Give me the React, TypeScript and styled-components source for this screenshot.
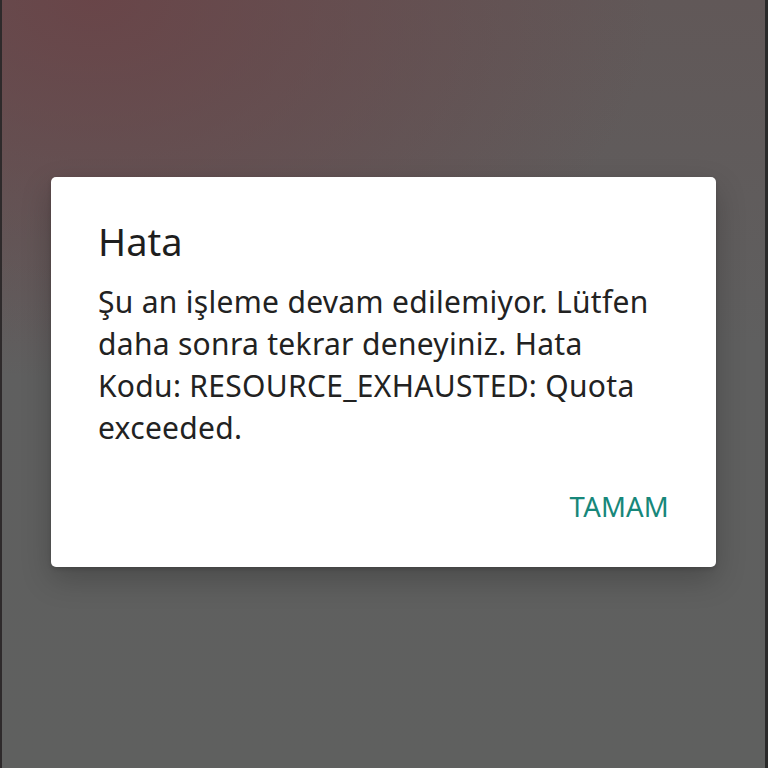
import React from "react";
import styled, { createGlobalStyle } from "styled-components";

const Global = createGlobalStyle`
  html, body { margin: 0; padding: 0; }
  body { width: 768px; height: 768px; overflow: hidden; }
  #root { width: 768px; height: 768px; }
`;

const Screen = styled.div`
  width: 768px;
  height: 768px;
  box-sizing: border-box;
  border-left: 2px solid #2e2a2b;
  border-right: 3px solid #2a2a2a;
  background:
    radial-gradient(ellipse 560px 380px at 12% 0%, rgba(106, 66, 70, 0.85), rgba(106, 66, 70, 0) 100%),
    linear-gradient(180deg, #615858 0%, #5f5f5f 45%, #5f605f 100%);
  display: flex;
  flex-direction: column;
  padding: 177px 49px 0 49px;
  font-family: "Noto Sans", "Open Sans", sans-serif;
`;

const Card = styled.div`
  background: #ffffff;
  border-radius: 5px;
  height: 390px;
  box-sizing: border-box;
  padding: 41px 47px 0 47px;
  box-shadow: 0 12px 30px rgba(0, 0, 0, 0.22), 0 2px 4px rgba(0, 0, 0, 0.15);
  display: flex;
  flex-direction: column;
`;

const Title = styled.h1`
  margin: 0;
  font-size: 38px;
  font-weight: 400;
  line-height: 46px;
  color: #1e1e1e;
`;

const Message = styled.p`
  margin: 17px 0 0 0;
  font-size: 30px;
  font-weight: 400;
  line-height: 42px;
  letter-spacing: 0.3px;
  color: #222222;
`;

const Actions = styled.div`
  display: flex;
  justify-content: flex-end;
  margin-top: 40px;
`;

const TextButton = styled.button`
  background: none;
  border: none;
  padding: 0;
  font-family: inherit;
  font-size: 27.5px;
  line-height: 36px;
  color: #17877a;
  letter-spacing: 0.2px;
  cursor: pointer;
`;

export default function App() {
  return (
    <>
      <Global />
      <Screen>
        <Card>
          <Title>Hata</Title>
          <Message>
            Şu an işleme devam edilemiyor. Lütfen daha sonra tekrar deneyiniz. Hata Kodu: RESOURCE_EXHAUSTED: Quota exceeded.
          </Message>
          <Actions>
            <TextButton>TAMAM</TextButton>
          </Actions>
        </Card>
      </Screen>
    </>
  );
}
